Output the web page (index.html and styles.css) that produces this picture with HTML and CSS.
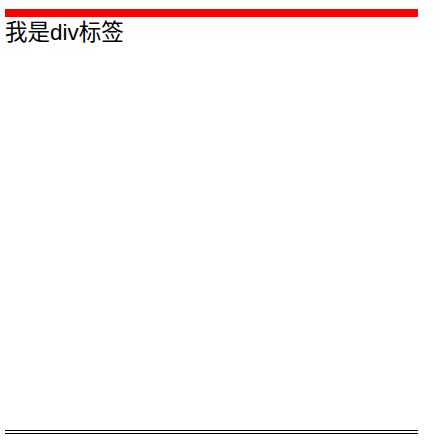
FILE: index.html
```html
<!DOCTYPE html>
<html lang="zh">
<head>
<meta charset="utf-8">
<link rel="stylesheet" href="styles.css">
</head>
<body>
<div class="page">
  <div class="bar"></div>
  <div class="label">我是div标签</div>
  <div class="spacer"></div>
  <hr class="rule">
</div>
</body>
</html>
```
FILE: styles.css
```css
html, body {
  margin: 0;
  padding: 0;
  background: #fff;
}
.page {
  width: 413px;
  margin-left: 5px;
  padding-top: 9px;
  display: flex;
  flex-direction: column;
  height: 440px;
  box-sizing: border-box;
}
.bar {
  height: 8px;
  background: #f00;
  flex: none;
}
.label {
  font-family: "Liberation Sans", "Noto Sans CJK SC", sans-serif;
  font-size: 22.5px;
  line-height: 31px;
  color: #000;
}
.spacer {
  flex: 1;
}
.rule {
  margin: 0 0 6px 0;
  border: 0;
  border-top: 1px solid #000;
  border-bottom: 1px solid #000;
  height: 2px;
  flex: none;
}
```
